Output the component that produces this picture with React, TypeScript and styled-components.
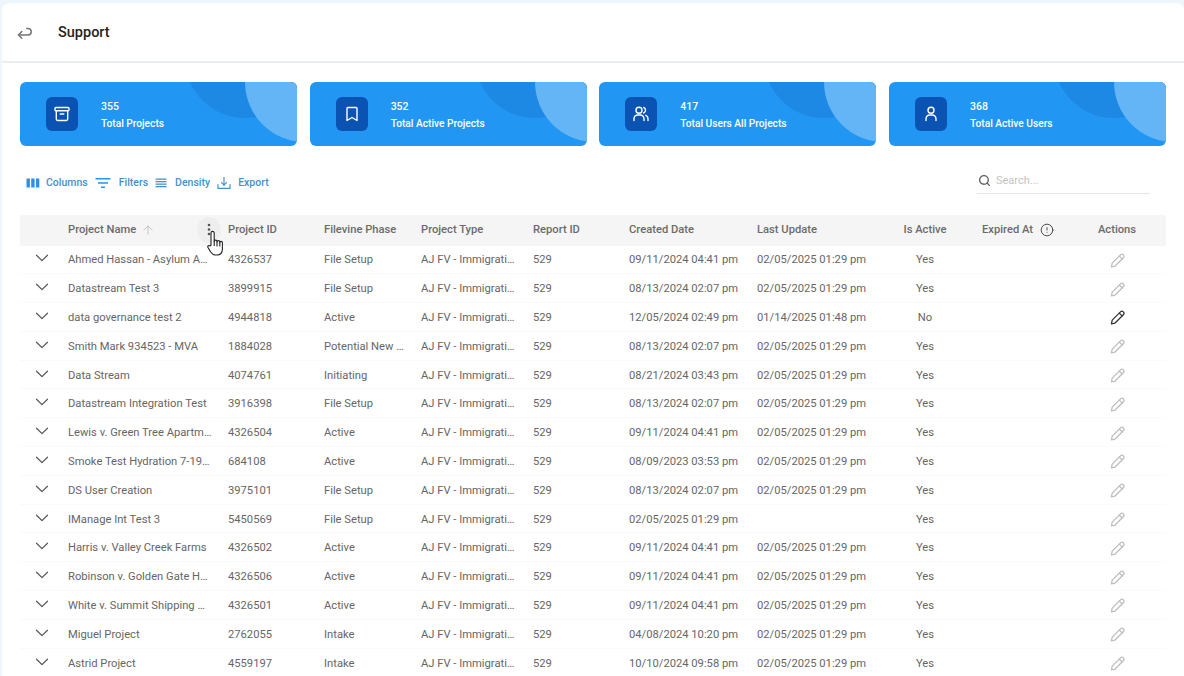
import React from 'react'
import styled, { createGlobalStyle } from 'styled-components'
import { ArrowUp, CircleAlert, Search } from 'lucide-react'

const GlobalStyle = createGlobalStyle`
  html, body {
    margin: 0;
    height: 100%;
    overflow: hidden;
    background: #eef6fc;
    font-family: Roboto, "Liberation Sans", sans-serif;
  }
`

const COLUMNS = '48px 160px 96px 97px 112px 96px 128px 128px 80px 103px 98px'

const Page = styled.div`
  width: 1182px;
  height: 673px;
  margin: 3px 0 0 2px;
  background: #fff;
  border-top-left-radius: 8px;
  border-top-right-radius: 8px;
  overflow: hidden;
`

const TopBar = styled.header`
  height: 60px;
  box-sizing: border-box;
  display: flex;
  align-items: center;
  padding-left: 14px;
  border-bottom: 2px solid #ebeef1;
`

const BackButton = styled.span`
  display: flex;
  color: #757575;
  margin-top: 2px;
`

const Title = styled.h1`
  margin: 0 0 0 24px;
  font-size: 14.5px;
  font-weight: 500;
  color: #262220;
`

const Content = styled.main`
  padding: 19px 18px 0 18px;
`

const StatRow = styled.section`
  display: grid;
  grid-template-columns: repeat(4, 277px);
  column-gap: 12.67px;
`

const StatCard = styled.article`
  position: relative;
  height: 64px;
  display: flex;
  align-items: center;
  padding-left: 26px;
  border-radius: 6px;
  background: #2196f3;
  overflow: hidden;
  color: #fff;

  &::before,
  &::after {
    content: '';
    position: absolute;
    border-radius: 50%;
  }
  &::before {
    left: 165px;
    top: -84px;
    width: 120px;
    height: 120px;
    background: #1e88e5;
  }
  &::after {
    left: 225px;
    top: -60px;
    width: 120px;
    height: 120px;
    background: #64b5f6;
  }
`

const IconTile = styled.div`
  width: 32px;
  height: 34px;
  border-radius: 6px;
  background: #0b53b2;
  display: flex;
  align-items: center;
  justify-content: center;
  flex: none;
`

const StatText = styled.div`
  margin: 2px 0 0 23px;
  display: flex;
  flex-direction: column;
  gap: 6px;
  position: relative;
  z-index: 1;
  font-size: 10.5px;
  line-height: 11px;
  font-weight: 500;
`

const StatLabel = styled.span`
  font-size: 10.2px;
`

const Toolbar = styled.div`
  height: 69px;
  display: flex;
  align-items: center;
  justify-content: space-between;
  padding: 4px 16px 0 6px;
  box-sizing: border-box;
`

const ToolGroup = styled.div`
  display: flex;
  align-items: center;
  gap: 7px;
`

const ToolButton = styled.span<{ $gap: number }>`
  display: flex;
  align-items: center;
  gap: ${(p) => p.$gap}px;
  font-size: 10.5px;
  font-weight: 500;
  color: #4a8fc9;
  svg {
    flex: none;
  }
`

const SearchBox = styled.div`
  width: 173px;
  height: 25px;
  box-sizing: border-box;
  display: flex;
  align-items: center;
  gap: 5px;
  padding: 0 0 1px 1px;
  margin-top: -2px;
  border-bottom: 1px solid #e6e6e6;
  font-size: 11px;
  color: #c4c4c4;
`

const HeaderRow = styled.div`
  display: grid;
  grid-template-columns: ${COLUMNS};
  height: 30.5px;
  align-items: center;
  background: #f5f5f5;
  font-size: 11.2px;
  font-weight: 500;
  color: #6b6b6b;
  border-radius: 2px;
`

const HeadCell = styled.div<{ $center?: boolean; $inset?: number }>`
  position: relative;
  display: flex;
  align-items: center;
  gap: 5px;
  margin-top: -1px;
  justify-content: ${(p) => (p.$center ? 'center' : 'flex-start')};
  padding-left: ${(p) => p.$inset ?? 0}px;
`

const SortIcon = styled.span`
  display: flex;
  color: #bdbdbd;
`

const MenuDot = styled.span`
  position: absolute;
  right: 7px;
  top: -6px;
  width: 24px;
  height: 26px;
  border-radius: 50%;
  background: #eeeeee;
  display: flex;
  align-items: center;
  justify-content: center;
`

const Kebab = styled.svg`
  display: block;
`

const Cursor = styled.span`
  position: absolute;
  left: 139px;
  top: 7px;
  display: flex;
  z-index: 2;
`

const Row = styled.div`
  display: grid;
  grid-template-columns: ${COLUMNS};
  height: 28.8px;
  padding-top: 1px;
  align-items: center;
  box-sizing: border-box;
  border-bottom: 1px solid #fafafa;
  font-size: 11.2px;
  color: #666;
`

const Cell = styled.div<{ $center?: boolean }>`
  white-space: nowrap;
  overflow: hidden;
  text-overflow: ellipsis;
  padding-right: ${(p) => (p.$center ? 0 : 16)}px;
  text-align: ${(p) => (p.$center ? 'center' : 'left')};
`

const Chevron = styled.span`
  display: flex;
  padding-left: 15px;
  margin-top: -3px;
  color: #555;
`

const EditIcon = styled.span<{ $active?: boolean }>`
  display: flex;
  justify-content: center;
  margin-top: 1px;
  color: ${(p) => (p.$active ? '#333' : '#bdbdbd')};
`

const stats = [
  { value: 355, label: 'Total Projects', icon: 'archive' },
  { value: 352, label: 'Total Active Projects', icon: 'bookmark' },
  { value: 417, label: 'Total Users All Projects', icon: 'users' },
  { value: 368, label: 'Total Active Users', icon: 'user' },
]

const rows = [
  ['Ahmed Hassan - Asylum Application', '4326537', 'File Setup', '09/11/2024 04:41 pm', '02/05/2025 01:29 pm', 'Yes'],
  ['Datastream Test 3', '3899915', 'File Setup', '08/13/2024 02:07 pm', '02/05/2025 01:29 pm', 'Yes'],
  ['data governance test 2', '4944818', 'Active', '12/05/2024 02:49 pm', '01/14/2025 01:48 pm', 'No'],
  ['Smith Mark 934523 - MVA', '1884028', 'Potential New Client', '08/13/2024 02:07 pm', '02/05/2025 01:29 pm', 'Yes'],
  ['Data Stream', '4074761', 'Initiating', '08/21/2024 03:43 pm', '02/05/2025 01:29 pm', 'Yes'],
  ['Datastream Integration Test', '3916398', 'File Setup', '08/13/2024 02:07 pm', '02/05/2025 01:29 pm', 'Yes'],
  ['Lewis v. Green Tree Apartments', '4326504', 'Active', '09/11/2024 04:41 pm', '02/05/2025 01:29 pm', 'Yes'],
  ['Smoke Test Hydration 7-19-2023', '684108', 'Active', '08/09/2023 03:53 pm', '02/05/2025 01:29 pm', 'Yes'],
  ['DS User Creation', '3975101', 'File Setup', '08/13/2024 02:07 pm', '02/05/2025 01:29 pm', 'Yes'],
  ['IManage Int Test 3', '5450569', 'File Setup', '02/05/2025 01:29 pm', '', 'Yes'],
  ['Harris v. Valley Creek Farms', '4326502', 'Active', '09/11/2024 04:41 pm', '02/05/2025 01:29 pm', 'Yes'],
  ['Robinson v. Golden Gate Holdings', '4326506', 'Active', '09/11/2024 04:41 pm', '02/05/2025 01:29 pm', 'Yes'],
  ['White v. Summit Shipping Company', '4326501', 'Active', '09/11/2024 04:41 pm', '02/05/2025 01:29 pm', 'Yes'],
  ['Miguel Project', '2762055', 'Intake', '04/08/2024 10:20 pm', '02/05/2025 01:29 pm', 'Yes'],
  ['Astrid Project', '4559197', 'Intake', '10/10/2024 09:58 pm', '02/05/2025 01:29 pm', 'Yes'],
]

const StatIcon = ({ name }: { name: string }) => (
  <svg width="18" height="18" viewBox="0 0 18 18" fill="none" stroke="#fff" strokeWidth="1.4" strokeLinecap="round" strokeLinejoin="round">
    {name === 'archive' && (
      <>
        <rect x="2" y="2.5" width="14" height="3.2" rx="1" />
        <path d="M3.3 5.7v8.3a1.5 1.5 0 0 0 1.5 1.5h8.4a1.5 1.5 0 0 0 1.5-1.5V5.7" />
        <path d="M7.2 9h3.6" />
      </>
    )}
    {name === 'bookmark' && <path d="M5 2.5h8a1 1 0 0 1 1 1v12l-5-3-5 3v-12a1 1 0 0 1 1-1z" />}
    {name === 'users' && (
      <>
        <circle cx="7" cy="5.2" r="3" />
        <path d="M2 15.5v-1.7A3.8 3.8 0 0 1 5.8 10h2.4A3.8 3.8 0 0 1 12 13.8v1.7" />
        <path d="M11.6 2.4a3 3 0 0 1 0 5.6" />
        <path d="M13.8 10.3a3.7 3.7 0 0 1 2.2 3.4v1.8" />
      </>
    )}
    {name === 'user' && (
      <>
        <circle cx="9" cy="5.2" r="3" />
        <path d="M4 15.5v-1.7A3.8 3.8 0 0 1 7.8 10h2.4a3.8 3.8 0 0 1 3.8 3.8v1.7" />
      </>
    )}
  </svg>
)

const BackIcon = () => (
  <svg width="18" height="18" viewBox="0 0 18 18" fill="none" stroke="currentColor" strokeWidth="1.5" strokeLinecap="round" strokeLinejoin="round">
    <path d="M2.5 11h9.5a3.2 3.2 0 0 0 0-6.4h-1.2" />
    <path d="M5.8 7.6 2.5 11l3.3 3.3" />
  </svg>
)

const ColumnsIcon = () => (
  <svg width="14" height="10" viewBox="0 0 14 10" fill="#2f8fe0">
    <rect x="0.5" y="0.5" width="3.4" height="9" />
    <rect x="5.2" y="0.5" width="3.4" height="9" />
    <rect x="9.9" y="0.5" width="3.4" height="9" />
  </svg>
)

const FilterIcon = () => (
  <svg width="16" height="12" viewBox="0 0 16 12" fill="#2f8fe0">
    <rect x="0.5" y="1" width="15" height="1.5" />
    <rect x="3" y="5.2" width="10" height="1.5" />
    <rect x="6" y="9.5" width="4" height="1.5" />
  </svg>
)

const DensityIcon = () => (
  <svg width="12" height="10" viewBox="0 0 12 10" fill="#4a8fc9">
    <rect x="0.5" y="0.5" width="11" height="1.3" />
    <rect x="0.5" y="3" width="11" height="1.3" />
    <rect x="0.5" y="5.5" width="11" height="1.3" />
    <rect x="0.5" y="8" width="11" height="1.3" />
  </svg>
)

const ExportIcon = () => (
  <svg width="14" height="14" viewBox="0 0 14 14" fill="none" stroke="#4a8fc9" strokeWidth="1.2" strokeLinecap="round" strokeLinejoin="round">
    <path d="M7 1.5v7.5" />
    <path d="M4.5 6.6 7 9l2.5-2.4" />
    <path d="M1 8.5v3.8h12V8.5" />
  </svg>
)

const ChevronIcon = () => (
  <svg width="14" height="8" viewBox="0 0 14 8" fill="none" stroke="currentColor" strokeWidth="1.2" strokeLinecap="round" strokeLinejoin="round">
    <path d="M1.5 1.2 7 6.6l5.5-5.4" />
  </svg>
)

const PencilIcon = () => (
  <svg width="17" height="17" viewBox="0 0 16 16" fill="none" stroke="currentColor" strokeWidth="1.2" strokeLinecap="round" strokeLinejoin="round">
    <path d="M2.3 14 3 10.500l7.800-7.800a1.900 1.900 0 0 1 2.700 2.700L5.700 13.200z" />
    <path d="M9.700 3.900l2.600 2.600" />
  </svg>
)

const HandCursor = () => (
  <svg width="17" height="26" viewBox="0 0 17 26" fill="#fff" stroke="#222" strokeWidth="1.1" strokeLinecap="round" strokeLinejoin="round">
    <path d="M4 15V3a1.600 1.600 0 0 1 3.200 0v8.500a1.400 1.400 0 0 1 2.800 0v.5a1.400 1.400 0 0 1 2.800 0v.7a1.300 1.300 0 0 1 2.600 0V19c0 3.500-2 6-5.500 6H8.500c-2.500 0-3.600-1.200-4.800-3L1 17.500c-.8-1.400 1-2.600 2-1.500z" />
    <path d="M7.200 11.500v4M10 12v4M12.800 12.700v3.300" fill="none" />
  </svg>
)

const App = () => (
  <>
    <GlobalStyle />
    <Page>
      <TopBar>
        <BackButton>
          <BackIcon />
        </BackButton>
        <Title>Support</Title>
      </TopBar>
      <Content>
        <StatRow>
          {stats.map((s) => (
            <StatCard key={s.label}>
              <IconTile>
                <StatIcon name={s.icon} />
              </IconTile>
              <StatText>
                <span>{s.value}</span>
                <StatLabel>{s.label}</StatLabel>
              </StatText>
            </StatCard>
          ))}
        </StatRow>
        <Toolbar>
          <ToolGroup>
            <ToolButton $gap={6}>
              <ColumnsIcon />
              Columns
            </ToolButton>
            <ToolButton $gap={8}>
              <FilterIcon />
              Filters
            </ToolButton>
            <ToolButton $gap={8}>
              <DensityIcon />
              Density
            </ToolButton>
            <ToolButton $gap={7}>
              <ExportIcon />
              Export
            </ToolButton>
          </ToolGroup>
          <SearchBox>
            <Search size={13} color="#616161" strokeWidth={2.5} />
            Search...
          </SearchBox>
        </Toolbar>
        <HeaderRow>
          <div />
          <HeadCell>
            Project Name
            <SortIcon>
              <ArrowUp size={14} strokeWidth={1.5} />
            </SortIcon>
            <MenuDot>
              <Kebab width="4" height="13" viewBox="0 0 4 13" fill="#555">
                <circle cx="2" cy="2" r="1.300" />
                <circle cx="2" cy="6.500" r="1.300" />
                <circle cx="2" cy="11" r="1.300" />
              </Kebab>
            </MenuDot>
            <Cursor>
              <HandCursor />
            </Cursor>
          </HeadCell>
          <HeadCell>Project ID</HeadCell>
          <HeadCell>Filevine Phase</HeadCell>
          <HeadCell>Project Type</HeadCell>
          <HeadCell>Report ID</HeadCell>
          <HeadCell>Created Date</HeadCell>
          <HeadCell>Last Update</HeadCell>
          <HeadCell $center>Is Active</HeadCell>
          <HeadCell $inset={17}>
            Expired At
            <CircleAlert size={14} strokeWidth={1.6} color="#444" style={{ marginLeft: 2 }} />
          </HeadCell>
          <HeadCell $center>Actions</HeadCell>
        </HeaderRow>
        {rows.map((r, i) => (
          <Row key={r[1]}>
            <Chevron>
              <ChevronIcon />
            </Chevron>
            <Cell>{r[0]}</Cell>
            <Cell>{r[1]}</Cell>
            <Cell>{r[2]}</Cell>
            <Cell>AJ FV - Immigration</Cell>
            <Cell>529</Cell>
            <Cell>{r[3]}</Cell>
            <Cell>{r[4]}</Cell>
            <Cell $center>{r[5]}</Cell>
            <Cell />
            <EditIcon $active={i === 2}>
              <PencilIcon />
            </EditIcon>
          </Row>
        ))}
      </Content>
    </Page>
  </>
)

export default App
